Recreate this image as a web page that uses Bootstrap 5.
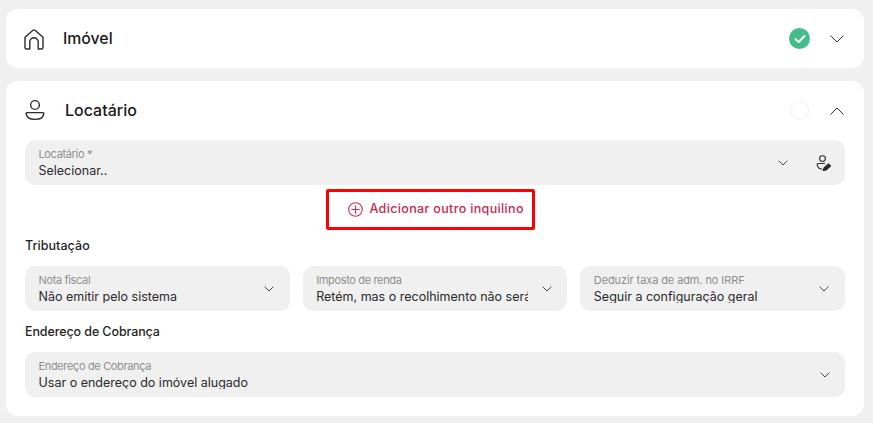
<!DOCTYPE html>
<html lang="pt-BR">
<head>
<meta charset="utf-8">
<title>Locatário</title>
<link href="https://cdn.jsdelivr.net/npm/bootstrap@5.3.0/dist/css/bootstrap.min.css" rel="stylesheet">
<style>
html,body{height:423px;overflow:hidden}
body{background:#f0f0f0;font-family:Inter,"Liberation Sans",sans-serif;color:#1c1c1c;padding:9px 9px 0 6px}
.sheet{background:#fff;border-radius:12px}
.sheet-a{height:59px;padding:0 20px 0 17px;margin-bottom:13px}
.sheet-b{height:335px;padding:0 19px}
.head-b{height:59px;padding-right:1px}
.title-a{font-size:15.8px;font-weight:500;margin:0 0 0 18px;color:#1a1a1a}
.title-b{font-size:16px;font-weight:500;margin:0 0 2px 20px;color:#1a1a1a}
.state-ok{width:21px;height:21px;border-radius:50%;background:#45bd8a;margin-right:20px}
.state-off{width:19px;height:19px;border-radius:50%;border:1.5px solid #f0f0f0;margin-right:21px}
.field{background:#f0f0f0;border-radius:10px;height:45px;padding:7px 15.5px 0 13.5px;overflow:hidden}
.field-main{min-width:0;flex:1 1 auto;height:30px;overflow:hidden}
.field-label{font-size:11px;line-height:14px;color:#8e8e8e;letter-spacing:-.35px;white-space:nowrap}
.label-wide{letter-spacing:-.1px}
.field-value{font-size:12.5px;line-height:15px;margin-top:2px;height:14px;overflow:hidden;color:#2a2a2a;white-space:nowrap}
.mark-box{width:209px;height:41px;margin:4px auto 0;border:3px solid #f00;border-radius:2px;gap:7px;padding-left:19px;transform:translateX(-5px)}
.add-text{font-size:12.5px;font-weight:500;color:#c8274f;letter-spacing:.35px;white-space:nowrap}
.sect{font-size:12.5px;font-weight:500;line-height:16px;color:#1f1f1f;letter-spacing:.05px}
.sect-1{margin-top:8px;margin-bottom:12px}
.sect-2{margin-top:13px;margin-bottom:12px;letter-spacing:-.1px}
.tri{display:grid;grid-template-columns:repeat(3,1fr);column-gap:13px}
.chev{flex:none;margin-left:12px;margin-top:13px}
.user-edit{flex:none;margin:8px -1.5px 0 28px}
.clip-v{width:212px;flex:none;margin-right:auto}
</style>
</head>
<body>
<div class="sheet sheet-a d-flex align-items-center">
  <svg width="22" height="24" viewBox="0 0 22 24" fill="none" stroke="#2b2b2b" stroke-width="1.4" stroke-linejoin="round" stroke-linecap="round"><path d="M2 10.2 10 3.3a1.6 1.6 0 0 1 2 0l8 6.9v10.2a1.6 1.6 0 0 1-1.6 1.6h-3.2V15a4.2 4.2 0 0 0-8.4 0v7H3.6A1.6 1.6 0 0 1 2 20.4z"/></svg>
  <span class="title-a">Imóvel</span>
  <div class="ms-auto d-flex align-items-center">
    <div class="state-ok d-flex align-items-center justify-content-center">
      <svg width="12" height="10" viewBox="0 0 12 10" fill="none" stroke="#fff" stroke-width="2" stroke-linecap="round" stroke-linejoin="round"><path d="M1.5 5.2 4.6 8 10.5 2"/></svg>
    </div>
    <svg width="14" height="8" viewBox="0 0 14 8" fill="none" stroke="#2b2b2b" stroke-width="1" stroke-linecap="round" stroke-linejoin="round"><path d="M.8.8 7 7l6.2-6.2"/></svg>
  </div>
</div>

<div class="sheet sheet-b">
  <div class="head-b d-flex align-items-center">
    <svg width="20" height="24" viewBox="0 0 20 24" fill="none" stroke="#2b2b2b" stroke-width="1.4"><circle cx="10" cy="6" r="4.4"/><path d="M2 13.6h16c.6 0 .9.4.8 1-.5 3.6-3.6 5.8-8.8 5.8s-8.300-2.200-8.800-5.800c-.1-.6.2-1 .8-1z"/></svg>
    <span class="title-b">Locatário</span>
    <div class="ms-auto d-flex align-items-center">
      <div class="state-off"></div>
      <svg width="14" height="8" viewBox="0 0 14 8" fill="none" stroke="#2b2b2b" stroke-width="1" stroke-linecap="round" stroke-linejoin="round"><path d="M.8 7.2 7 1l6.2 6.2"/></svg>
    </div>
  </div>

  <div class="field d-flex align-items-start">
    <div class="field-main">
      <div class="field-label">Locatário *</div>
      <div class="field-value">Selecionar..</div>
    </div>
    <svg class="chev" width="10" height="6" viewBox="0 0 10 6" fill="none" stroke="#444" stroke-width="1" stroke-linecap="round" stroke-linejoin="round"><path d="M1 1l4 4 4-4"/></svg>
    <svg class="user-edit" width="15" height="18" viewBox="0 0 15 18" fill="none" stroke="#2b2b2b" stroke-width="1.1"><circle cx="6.5" cy="3.6" r="2.9"/><path d="M9 8.5H2.5c-1 0-1.5.7-1.3 1.6.5 2.5 2 3.8 4.8 3.9"/><path d="M7 15.5 8 13l4.5-4 2 2-4.500 4z" fill="#2b2b2b" stroke-linejoin="round"/></svg>
  </div>

  <div class="mark-box d-flex align-items-center">
    <svg width="15" height="15" viewBox="0 0 15 15" fill="none" stroke="#d6294f" stroke-width="1.1" stroke-linecap="round"><circle cx="7.5" cy="7.5" r="6.8"/><path d="M7.5 3.800v7.400M3.800 7.500h7.400"/></svg>
    <span class="add-text">Adicionar outro inquilino</span>
  </div>

  <div class="sect sect-1">Tributação</div>
  <div class="tri">
    <div class="field d-flex align-items-start">
      <div class="field-main">
        <div class="field-label">Nota fiscal</div>
        <div class="field-value">Não emitir pelo sistema</div>
      </div>
      <svg class="chev" width="10" height="6" viewBox="0 0 10 6" fill="none" stroke="#444" stroke-width="1" stroke-linecap="round" stroke-linejoin="round"><path d="M1 1l4 4 4-4"/></svg>
    </div>
    <div class="field d-flex align-items-start">
      <div class="field-main clip-v">
        <div class="field-label">Imposto de renda</div>
        <div class="field-value">Retém, mas o recolhimento não será feito</div>
      </div>
      <svg class="chev" width="10" height="6" viewBox="0 0 10 6" fill="none" stroke="#444" stroke-width="1" stroke-linecap="round" stroke-linejoin="round"><path d="M1 1l4 4 4-4"/></svg>
    </div>
    <div class="field d-flex align-items-start">
      <div class="field-main">
        <div class="field-label label-wide">Deduzir taxa de adm. no IRRF</div>
        <div class="field-value">Seguir a configuração geral</div>
      </div>
      <svg class="chev" width="10" height="6" viewBox="0 0 10 6" fill="none" stroke="#444" stroke-width="1" stroke-linecap="round" stroke-linejoin="round"><path d="M1 1l4 4 4-4"/></svg>
    </div>
  </div>

  <div class="sect sect-2">Endereço de Cobrança</div>
  <div class="field d-flex align-items-start">
    <div class="field-main">
      <div class="field-label">Endereço de Cobrança</div>
      <div class="field-value">Usar o endereço do imóvel alugado</div>
    </div>
    <svg class="chev" width="10" height="6" viewBox="0 0 10 6" fill="none" stroke="#444" stroke-width="1" stroke-linecap="round" stroke-linejoin="round"><path d="M1 1l4 4 4-4"/></svg>
  </div>
</div>
<script src="https://cdn.jsdelivr.net/npm/bootstrap@5.3.0/dist/js/bootstrap.bundle.min.js"></script>
</body>
</html>
